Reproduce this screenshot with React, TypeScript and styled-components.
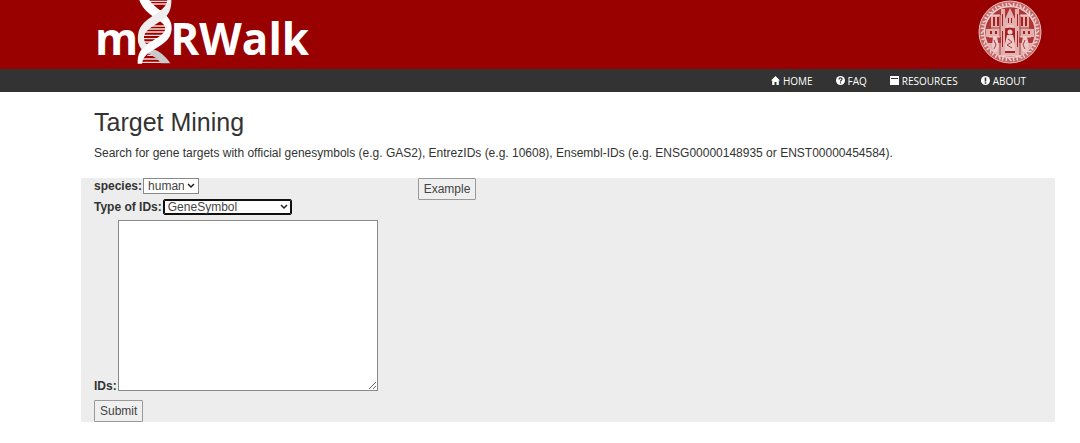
import React from "react";
import styled, { createGlobalStyle } from "styled-components";

const GlobalStyle = createGlobalStyle`
  * { box-sizing: border-box; }
  body {
    margin: 0;
    background: #fff;
    color: #333;
    font: 12px/18px "Liberation Sans", Arial, sans-serif;
  }
`;

const Banner = styled.header`
  display: flex;
  justify-content: space-between;
  align-items: flex-start;
  height: 69px;
  padding: 0 38px 0 95px;
  background: #990000;
`;

const Logo = styled.a`
  display: flex;
  align-items: flex-start;
  color: #fff;
  text-decoration: none;
  font: 700 44px/76px "Open Sans", "Noto Sans", sans-serif;
`;

const Helix = styled.svg`
  flex: none;
  width: 37px;
  height: 64px;
  margin: 0 -4px 0 -1px;
`;

const Seal = styled.svg`
  flex: none;
  width: 64px;
  height: 64px;
`;

const Nav = styled.nav`
  display: flex;
  justify-content: flex-end;
  align-items: center;
  gap: 23px;
  height: 23px;
  padding-right: 54px;
  background: #333;
`;

const NavLink = styled.a`
  display: flex;
  align-items: center;
  gap: 3px;
  color: #fff;
  text-decoration: none;
  font: 10px/22px "Open Sans", "Noto Sans", sans-serif;
`;

const NavIcon = styled.svg`
  width: 9px;
  height: 9px;
`;

const Main = styled.main`
  padding: 16px 25px 0 81px;
`;

const Title = styled.h1`
  margin: 0 0 8px;
  padding-left: 13px;
  font-size: 25px;
  font-weight: 400;
  line-height: 28px;
`;

const Intro = styled.p`
  margin: 0 0 16px;
  padding-left: 13px;
`;

const Form = styled.form`
  display: flex;
  align-items: flex-start;
  gap: 40px;
  padding-left: 13px;
  background: #ededed;
`;

const Fields = styled.div`
  display: flex;
  flex-direction: column;
  align-items: flex-start;
`;

const Field = styled.div<{ $align?: string }>`
  display: flex;
  align-items: ${(p) => p.$align ?? "center"};
  gap: 1px;
  margin-bottom: ${(p) => (p.$align ? 9 : 5)}px;
`;

const Label = styled.label`
  font-weight: 700;
  line-height: 10px;
`;

const SelectBox = styled.span`
  position: relative;
  display: flex;
`;

const Select = styled.select<{ $width: number; $focused?: boolean }>`
  appearance: none;
  width: ${(p) => p.$width}px;
  height: 16px;
  padding: 0 14px 0 4px;
  border: 1px solid ${(p) => (p.$focused ? "#101010" : "#8a8a8a")};
  box-shadow: ${(p) => (p.$focused ? "inset 0 0 0 1px #101010" : "none")};
  border-radius: ${(p) => (p.$focused ? 2 : 0)}px;
  background: #fff;
  color: #444;
  font: 12px/14px "Liberation Sans", Arial, sans-serif;
`;

const Chevron = styled.svg`
  position: absolute;
  right: 4px;
  top: 5px;
  width: 8px;
  height: 6px;
  pointer-events: none;
`;

const IdsInput = styled.textarea`
  display: block;
  width: 260px;
  height: 171px;
  padding: 2px;
  border: 1px solid #8a8a8a;
  background: #fff;
  font: 12px/16px "Liberation Mono", monospace;
`;

const Button = styled.button`
  height: 22px;
  padding: 0 5px;
  border: 1px solid #999;
  border-radius: 1px;
  background: #efefef;
  color: #444;
  font: 12px/18px "Liberation Sans", Arial, sans-serif;
`;

function DnaHelix() {
  return (
    <Helix viewBox="21 0 111 192" aria-hidden="true">
      <g stroke="#f3d9d9" strokeWidth="4">
        <path d="M60 4H116M66 12H112M76 32H104M58 78H112M44 87H116M36 96H116M32 106H114M32 116H106M36 126H92M44 134H80M52 166H78M32 177H94M28 187H108" />
      </g>
      <path d="M26 118C34 140 52 144 76 150C96 158 110 174 121 190H93C82 174 66 166 46 156C30 148 26 138 26 118Z" fill="#c9c9c9" />
      <path d="M28 0H58C68 16 88 28 104 42C119 55 126 70 125 88C123 122 92 137 66 152C48 162 39 172 36 191H23C22 163 32 147 50 133C76 116 104 104 106 86C106 70 84 60 66 47C48 34 34 18 28 0Z" fill="#fff" />
      <path d="M112 0H124C125 24 118 41 102 56C80 72 48 86 42 108C41 120 44 128 52 136L38 147C26 139 22 126 24 106C27 72 56 56 82 39C99 27 110 16 112 0Z" fill="#eee" />
    </Helix>
  );
}

function UniversitySeal() {
  const ticks = Array.from({ length: 48 }, (_, i) => i * 7.5);
  return (
    <Seal viewBox="0 0 64 64" role="img" aria-label="University seal">
      <circle cx="32" cy="32" r="31" fill="#c46666" stroke="#e9c0c0" strokeWidth="1" />
      <g stroke="#f0d0d0" strokeWidth="1.500">
        {ticks.map((a, i) => (
          <path key={a} d={i % 3 ? "M32 2.5V6" : "M30.500 3L33.500 6"} transform={`rotate(${a} 32 32)`} />
        ))}
      </g>
      <circle cx="32" cy="32" r="25.500" fill="#b03636" stroke="#efcccc" strokeWidth="1.500" />
      <g fill="#e3b0b0">
        <path d="M13 15h10v14H13zM41 15h10v14H41zM23 9h4v45h-4zM37 9h4v45h-4zM27 19l5-11 5 11v9H27z" />
        <path d="M8 29h15v8H8zM41 29h15v8H41zM9 43h14v5H11zM41 43h14l-2 5H41z" />
        <path d="M13 48h38l-8 8H21z" />
      </g>
      <g fill="#a32020">
        <path d="M15 17h2v9h-2zM19 17h2v9h-2zM43 17h2v9h-2zM47 17h2v9h-2zM24 14h1v12h-1zM39 14h1v12h-1zM30 18h1v5h-1zM33 18h1v5h-1z" />
        <path d="M12 31h2v3h-2zM17 31h2v3h-2zM45 31h2v3h-2zM50 31h2v3h-2zM24 31h1v16h-1zM39 31h1v16h-1z" />
        <path d="M27 53V33c0-7 10-7 10 0v20z" />
      </g>
      <g fill="#edc8c8">
        <circle cx="32" cy="32" r="2.500" />
        <path d="M29 35h6l2 9v7H27v-7zM15 37h4l2 9-2 6h-4l-1-7zM45 37h4l2 8-2 7h-4l-2-6z" />
      </g>
      <path d="M30 39l4 3-5 3 5 3M16 40l2 5-2 4M47 40l-2 5 2 4M10 28h12M42 28h12M22 9v46M42 9v46" fill="none" stroke="#b03c3c" />
      <path d="M12 15h10M42 15h10M11 37h11M42 37h11M28 26h8M21 56h22" stroke="#f2d5d5" strokeWidth="1" />
    </Seal>
  );
}

const icons = {
  home: <path d="M4.500 0L9 4.500H7.800V9H5.500V6H3.500V9H1.200V4.500H0L4.500 0Z" fill="#fff" />,
  faq: (
    <>
      <circle cx="4.500" cy="4.500" r="4.500" fill="#fff" />
      <path d="M3 3.500C3 1.500 6 1.500 6 3.200C6 4.200 4.500 4.200 4.500 5.500M4.500 6.300V7.500" fill="none" stroke="#333" strokeWidth="1.200" />
    </>
  ),
  resources: (
    <>
      <path d="M0 0H9V9H0Z" fill="#fff" />
      <path d="M1 2.500H8" stroke="#333" />
    </>
  ),
  about: (
    <>
      <circle cx="4.500" cy="4.500" r="4.500" fill="#fff" />
      <path d="M4.500 1.500V5.500M4.500 6.300V7.800" stroke="#333" strokeWidth="1.600" />
    </>
  ),
};

const links: { icon: keyof typeof icons; text: string }[] = [
  { icon: "home", text: "HOME" },
  { icon: "faq", text: "FAQ" },
  { icon: "resources", text: "RESOURCES" },
  { icon: "about", text: "ABOUT" },
];

function DropDown(props: { id: string; width: number; focused?: boolean; options: string[] }) {
  return (
    <SelectBox>
      <Select id={props.id} $width={props.width} $focused={props.focused}>
        {props.options.map((o) => (
          <option key={o}>{o}</option>
        ))}
      </Select>
      <Chevron viewBox="0 0 8 6" aria-hidden="true">
        <path d="M1 1L4 4L7 1" fill="none" stroke="#222" strokeWidth="1.500" />
      </Chevron>
    </SelectBox>
  );
}

export default function App() {
  return (
    <>
      <GlobalStyle />
      <Banner>
        <Logo href="#home">
          <span>m</span>
          <DnaHelix />
          <span>RWalk</span>
        </Logo>
        <UniversitySeal />
      </Banner>
      <Nav>
        {links.map((l) => (
          <NavLink key={l.text} href={`#${l.icon}`}>
            <NavIcon viewBox="0 0 9 9" aria-hidden="true">{icons[l.icon]}</NavIcon>
            {l.text}
          </NavLink>
        ))}
      </Nav>
      <Main>
        <Title>Target Mining</Title>
        <Intro>
          Search for gene targets with official genesymbols (e.g. GAS2), EntrezIDs (e.g. 10608), Ensembl-IDs (e.g.
          ENSG00000148935 or ENST00000454584).
        </Intro>
        <Form onSubmit={(e) => e.preventDefault()}>
          <Fields>
            <Field>
              <Label htmlFor="species">species:</Label>
              <DropDown id="species" width={56} options={["human"]} />
            </Field>
            <Field>
              <Label htmlFor="id-type">Type of IDs:</Label>
              <DropDown id="id-type" width={129} focused options={["GeneSymbol"]} />
            </Field>
            <Field $align="flex-end">
              <Label htmlFor="ids">IDs:</Label>
              <IdsInput id="ids" />
            </Field>
            <Button type="submit">Submit</Button>
          </Fields>
          <Button type="button">Example</Button>
        </Form>
      </Main>
    </>
  );
}
